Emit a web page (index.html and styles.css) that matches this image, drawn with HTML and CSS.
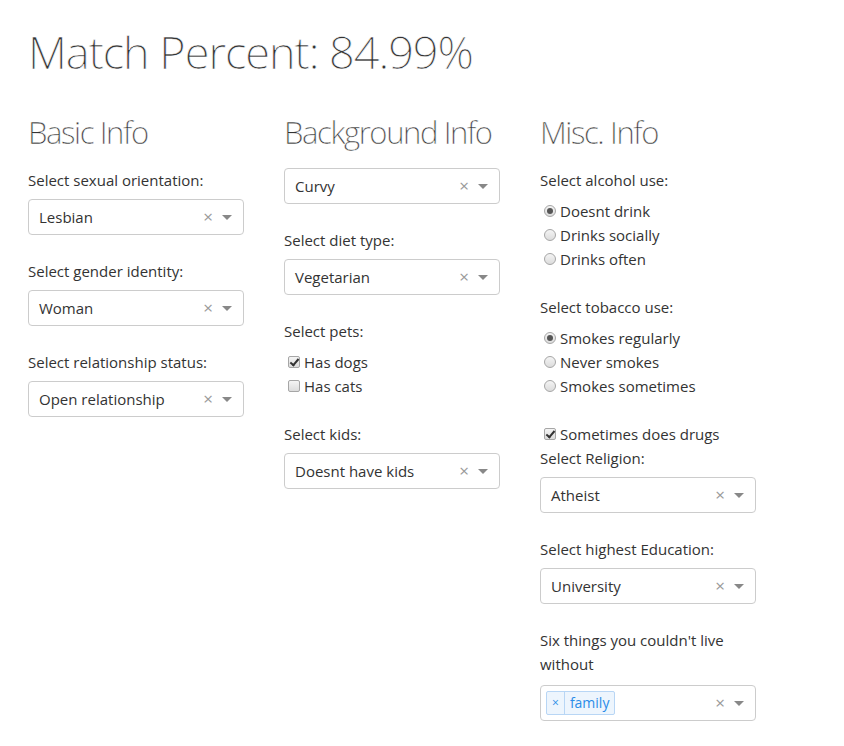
FILE: index.html
```html
<!DOCTYPE html>
<html lang="en">
<head>
    <meta charset="UTF-8">
    <title>Match Percent</title>
    <link rel="stylesheet" href="styles.css">
</head>
<body>
    <h1 class="title">Match Percent: 84.99%</h1>

    <div class="row">
        <!-- Basic Info -->
        <div class="col">
            <h2>Basic Info</h2>
            <div class="form-group">
                <label>Select sexual orientation:</label>
                <div class="select"><span class="value">Lesbian</span><span class="clear">×</span><span class="caret"></span></div>
            </div>
            <div class="form-group">
                <label>Select gender identity:</label>
                <div class="select"><span class="value">Woman</span><span class="clear">×</span><span class="caret"></span></div>
            </div>
            <div class="form-group">
                <label>Select relationship status:</label>
                <div class="select"><span class="value">Open relationship</span><span class="clear">×</span><span class="caret"></span></div>
            </div>
        </div>

        <!-- Background Info -->
        <div class="col">
            <h2>Background Info</h2>
            <div class="form-group">
                <div class="select"><span class="value">Curvy</span><span class="clear">×</span><span class="caret"></span></div>
            </div>
            <div class="form-group">
                <label>Select diet type:</label>
                <div class="select"><span class="value">Vegetarian</span><span class="clear">×</span><span class="caret"></span></div>
            </div>
            <div class="form-group">
                <label>Select pets:</label>
                <div class="option"><span class="box checked"></span>Has dogs</div>
                <div class="option"><span class="box"></span>Has cats</div>
            </div>
            <div class="form-group">
                <label>Select kids:</label>
                <div class="select"><span class="value">Doesnt have kids</span><span class="clear">×</span><span class="caret"></span></div>
            </div>
        </div>

        <!-- Misc Info -->
        <div class="col">
            <h2>Misc. Info</h2>
            <div class="form-group">
                <label>Select alcohol use:</label>
                <div class="option"><span class="radio checked"></span>Doesnt drink</div>
                <div class="option"><span class="radio"></span>Drinks socially</div>
                <div class="option"><span class="radio"></span>Drinks often</div>
            </div>
            <div class="form-group">
                <label>Select tobacco use:</label>
                <div class="option"><span class="radio checked"></span>Smokes regularly</div>
                <div class="option"><span class="radio"></span>Never smokes</div>
                <div class="option"><span class="radio"></span>Smokes sometimes</div>
            </div>
            <div class="single-check">
                <div class="option"><span class="box checked"></span>Sometimes does drugs</div>
            </div>
            <div class="form-group">
                <label>Select Religion:</label>
                <div class="select"><span class="value">Atheist</span><span class="clear">×</span><span class="caret"></span></div>
            </div>
            <div class="form-group">
                <label>Select highest Education:</label>
                <div class="select"><span class="value">University</span><span class="clear">×</span><span class="caret"></span></div>
            </div>
            <div class="form-group">
                <label class="wrap">Six things you couldn't live without</label>
                <div class="select multi">
                    <span class="tag"><span class="tag-x">×</span><span class="tag-text">family</span></span>
                    <span class="value"></span><span class="clear">×</span><span class="caret"></span>
                </div>
            </div>
        </div>
    </div>
</body>
</html>
```

FILE: styles.css
```css
body {
    font-family: "Open Sans", "Liberation Sans", sans-serif;
    font-size: 15px;
    line-height: 24px;
    color: #333;
    background-color: #fff;
    margin: 0;
    padding: 0 28px;
}

.title {
    font-size: 45px;
    font-weight: 300;
    letter-spacing: -1px;
    -webkit-text-stroke: 0.6px #fff; /* adelgaza el trazo */
    line-height: 56px;
    margin: 24px 0 32px 0;
    -webkit-font-smoothing: antialiased;
}

.row {
    display: flex;
}

.col {
    width: 256px;
}

h2 {
    font-size: 31px;
    font-weight: 300;
    letter-spacing: -1.4px;
    -webkit-text-stroke: 0.4px #fff;
    line-height: 40px;
    margin: 0 0 16px 0;
    -webkit-font-smoothing: antialiased;
}

/* Grupos */
.form-group {
    width: 216px;
    margin-bottom: 24px;
}

label {
    display: block;
    margin-bottom: 7px;
}

label.wrap {
    margin-bottom: 9px;
}

/* Select */
.select {
    display: flex;
    align-items: center;
    height: 36px;
    box-sizing: border-box;
    border: 1px solid #ccc;
    border-radius: 4px;
    padding: 0 10px;
}

.value {
    flex: 1;
    white-space: nowrap;
}

.clear {
    color: #999;
    font-size: 17px;
    margin-right: 9px;
}

.caret {
    width: 0;
    height: 0;
    border-left: 5px solid transparent;
    border-right: 5px solid transparent;
    border-top: 5px solid #888;
    margin-right: 1px;
}

.multi {
    padding-left: 5px;
}

.tag {
    display: flex;
    height: 24px;
    box-sizing: border-box;
    background-color: #edf5fd;
    border: 1px solid #b8d6f5;
    border-radius: 2px;
    color: #2a8ce8;
    line-height: 22px;
    font-size: 14px;
}

.tag-x {
    font-size: 12px;
    padding: 0 5px;
    border-right: 1px solid #b8d6f5;
}

.tag-text {
    padding: 0 5px;
}

/* Checkbox y radio */
.option {
    display: flex;
    align-items: center;
    white-space: nowrap;
}

.box, .radio {
    display: inline-block;
    width: 12px;
    height: 12px;
    box-sizing: border-box;
    border: 1px solid #a6a6a6;
    background: linear-gradient(#f4f4f4, #dcdcdc);
    margin: 0 4px 0 4px;
    position: relative;
}

.box {
    border-radius: 2px;
}

.radio {
    border-radius: 50%;
}

.box.checked::after {
    content: "";
    position: absolute;
    left: 3px;
    top: 0px;
    width: 3px;
    height: 7px;
    border-right: 2px solid #333;
    border-bottom: 2px solid #333;
    transform: rotate(40deg);
}

.radio.checked::after {
    content: "";
    position: absolute;
    left: 2px;
    top: 2px;
    width: 6px;
    height: 6px;
    border-radius: 50%;
    background-color: #555;
}

.single-check {
    width: 216px;
}
```
